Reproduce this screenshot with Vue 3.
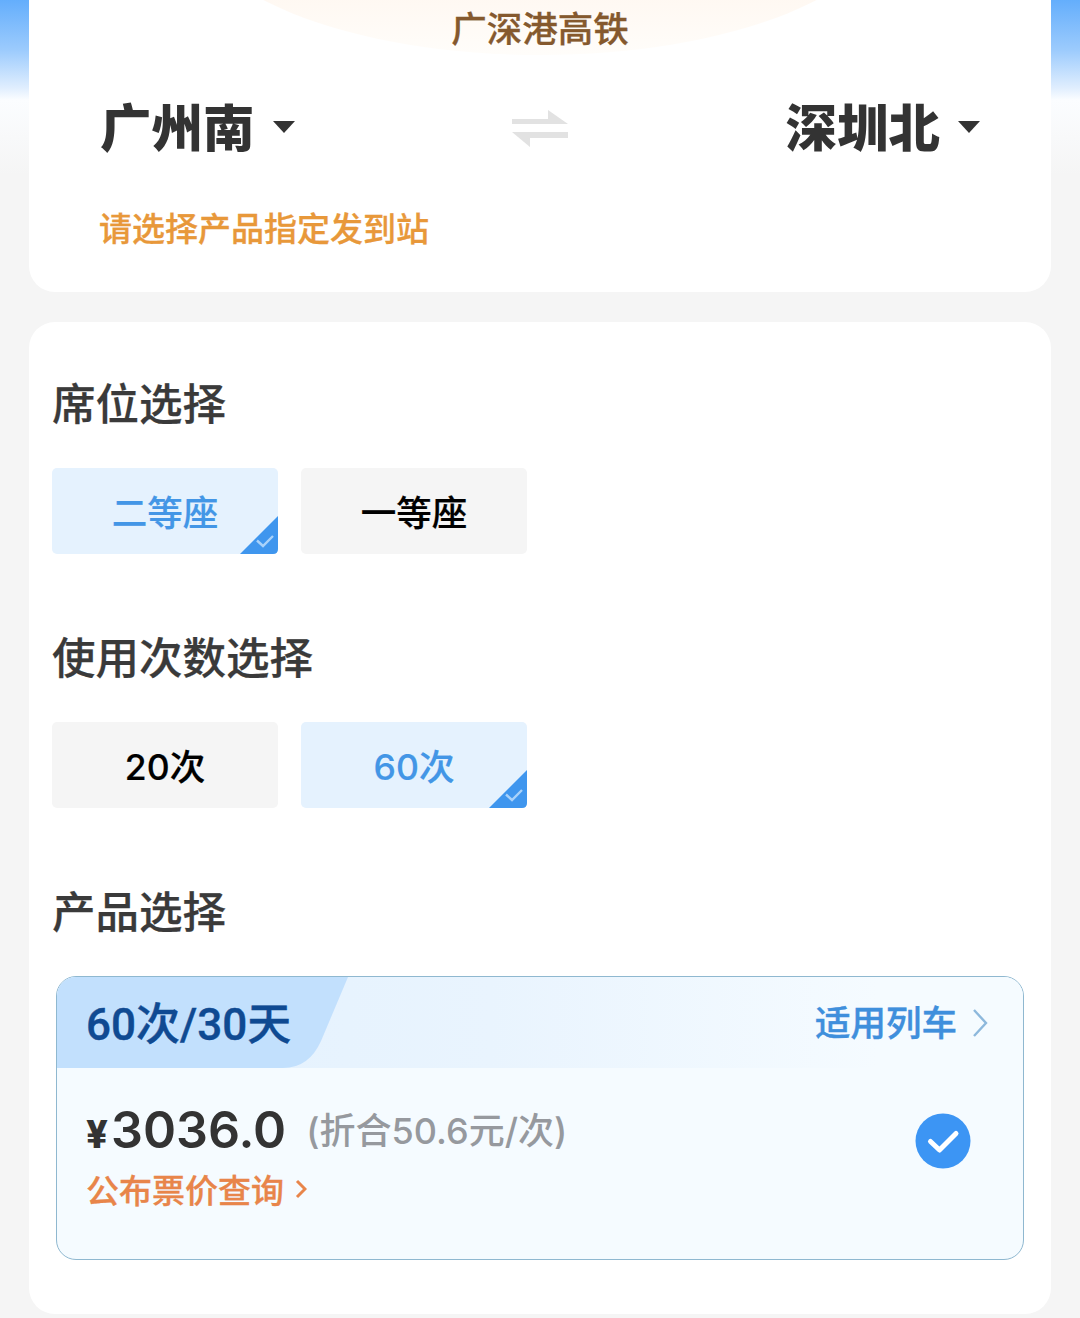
<script setup>
const seats = [
  { label: '二等座', active: true },
  { label: '一等座', active: false }
]
const counts = [
  { label: '20次', active: false },
  { label: '60次', active: true }
]
</script>

<template>
  <div class="page">
    <section class="card route">
      <div class="arc"></div>
      <div class="line-name">广深港高铁</div>
      <div class="stations">
        <div class="station">
          <span class="station-name">广州南</span>
          <span class="caret"></span>
        </div>
        <svg class="swap" width="60" height="40" viewBox="0 0 60 40">
          <path d="M2 16H58L38 2V11H2Z M2 24H58V30H20V39Z" fill="#e2e2e2" />
        </svg>
        <div class="station">
          <span class="station-name">深圳北</span>
          <span class="caret"></span>
        </div>
      </div>
      <div class="hint">请选择产品指定发到站</div>
    </section>

    <section class="card options">
      <h2 class="title">席位选择</h2>
      <div class="chips">
        <div v-for="s in seats" :key="s.label" class="chip" :class="{ active: s.active }">
          <span class="chip-text">{{ s.label }}</span>
          <svg v-if="s.active" class="corner" width="38" height="38" viewBox="0 0 38 38">
            <path d="M0 38L38 0V33Q38 38 33 38Z" fill="#3f96ee" />
            <path d="M17 24.5L23 30L33 20" fill="none" stroke="#a9d2fa" stroke-width="2.4" />
          </svg>
        </div>
      </div>

      <h2 class="title second">使用次数选择</h2>
      <div class="chips">
        <div v-for="c in counts" :key="c.label" class="chip" :class="{ active: c.active }">
          <span class="chip-text">{{ c.label }}</span>
          <svg v-if="c.active" class="corner" width="38" height="38" viewBox="0 0 38 38">
            <path d="M0 38L38 0V33Q38 38 33 38Z" fill="#3f96ee" />
            <path d="M17 24.5L23 30L33 20" fill="none" stroke="#a9d2fa" stroke-width="2.4" />
          </svg>
        </div>
      </div>

      <h2 class="title second">产品选择</h2>
      <div class="product">
        <div class="product-head">
          <svg class="tab" width="292" height="91" viewBox="0 0 292 91">
            <path d="M0 0H291L264 64Q252 91 226 91H0Z" fill="#c2e0fd" />
          </svg>
          <span class="plan">60次/30天</span>
          <span class="link">
            <span class="link-text">适用列车</span>
            <svg width="16" height="30" viewBox="0 0 16 30">
              <path d="M2 2L14 15L2 28" fill="none" stroke="#8db8dc" stroke-width="2.4" />
            </svg>
          </span>
        </div>
        <div class="product-body">
          <div class="info">
            <div class="price-row">
              <span class="yen">¥</span><span class="price">3036.0</span>
              <span class="per">(折合50.6元/次)</span>
            </div>
            <div class="query">
              <span class="query-text">公布票价查询</span>
              <svg width="12" height="22" viewBox="0 0 12 22">
                <path d="M2 3L10 11L2 19" fill="none" stroke="#e8854a" stroke-width="3" />
              </svg>
            </div>
          </div>
          <svg class="check" width="56" height="56" viewBox="0 0 56 56">
            <circle cx="28" cy="28" r="27.5" fill="#3c95f4" />
            <path d="M15.5 28.5L24.5 37L41 20.5" fill="none" stroke="#ffffff" stroke-width="5" stroke-linecap="round" stroke-linejoin="round" />
          </svg>
        </div>
      </div>
    </section>
  </div>
</template>

<style>
html, body {
  margin: 0;
  background: #f5f5f5;
}
</style>

<style scoped>
.page {
  box-sizing: border-box;
  height: 1318px;
  overflow: hidden;
  padding: 0 29px;
  display: flex;
  flex-direction: column;
  gap: 30px;
  background: linear-gradient(180deg, #64aefc 0, #9ccbfd 50px, #e0eefe 88px, #fbfdff 100px, #f5f5f5 175px);
  font-family: "Noto Sans CJK SC", "Liberation Sans", sans-serif;
}
.card {
  background: #fff;
  box-sizing: border-box;
  position: relative;
}
.route {
  height: 292px;
  flex: none;
  border-radius: 0 0 26px 26px;
  overflow: hidden;
}
.arc {
  position: absolute;
  left: 161px;
  top: -229px;
  width: 700px;
  height: 284px;
  border-radius: 50%;
  background: linear-gradient(180deg, #fff6ee 70%, #fffdfa 100%);
}
.line-name {
  position: relative;
  height: 54px;
  line-height: 54px;
  text-align: center;
  font-size: 35.5px;
  color: #85592e;
  font-weight: 500;
  -webkit-text-stroke: 0.3px #85592e;
}
.stations {
  position: relative;
  display: flex;
  align-items: center;
  justify-content: space-between;
  padding: 0 71px;
  height: 74px;
  margin-top: 35px;
}
.station {
  display: flex;
  align-items: center;
  gap: 18px;
}
.station-name {
  font-size: 51.5px;
  line-height: 74px;
  font-weight: 900;
  color: #333;
  position: relative;
  top: -1px;
}
.caret {
  width: 0;
  height: 0;
  border-left: 11px solid transparent;
  border-right: 11px solid transparent;
  border-top: 12px solid #333;
  margin-top: 2px;
}
.swap {
  margin-top: 4px;
}
.hint {
  position: relative;
  margin: 39px 0 0 70px;
  font-size: 33px;
  line-height: 50px;
  font-weight: 500;
  color: #e8983a;
  -webkit-text-stroke: 0.3px #e8983a;
}
.options {
  flex: none;
  height: 992px;
  border-radius: 26px;
  padding: 50px 23px 0;
}
.title {
  margin: 0;
  font-size: 43.5px;
  line-height: 60px;
  font-weight: 500;
  color: #3a3a3a;
  -webkit-text-stroke: 0.25px #3a3a3a;
}
.title.second {
  margin-top: 72px;
}
.chips {
  display: flex;
  gap: 23px;
  margin-top: 36px;
}
.chip {
  position: relative;
  width: 226px;
  height: 86px;
  border-radius: 5px;
  background: #f5f5f5;
  display: flex;
  align-items: center;
  justify-content: center;
  font-family: Inter, "Noto Sans CJK SC", sans-serif;
  font-size: 35.5px;
  font-weight: 500;
  color: #000;
}
.chip-text {
  position: relative;
  top: -1px;
  -webkit-text-stroke: 0.2px currentColor;
}
.chip.active {
  background: #e5f2fe;
  color: #4396e6;
}
.corner {
  position: absolute;
  right: 0;
  bottom: 0;
}
.product {
  box-sizing: border-box;
  width: 968px;
  height: 284px;
  margin: 36px 0 0 4px;
  border: 1.5px solid #8fb8d0;
  border-radius: 20px;
  overflow: hidden;
  background: #f5fbff;
}
.product-head {
  position: relative;
  height: 91px;
  display: flex;
  align-items: center;
  justify-content: space-between;
  padding: 0 35px 0 29px;
  background: linear-gradient(90deg, #e3f1fe 0, #e9f4fe 45%, #f5fbff 85%);
}
.tab {
  position: absolute;
  left: 0;
  top: 0;
}
.plan {
  position: relative;
  top: -2px;
  font-family: Roboto, "Noto Sans CJK SC", sans-serif;
  font-size: 44px;
  font-weight: 500;
  color: #0f4a92;
  -webkit-text-stroke: 0.4px #0f4a92;
}
.link {
  display: flex;
  align-items: center;
  gap: 15px;
  font-size: 35.5px;
  font-weight: 500;
  color: #3f8fdc;
}
.link-text {
  position: relative;
  top: -2px;
  -webkit-text-stroke: 0.4px #3f8fdc;
}
.product-body {
  display: flex;
  justify-content: space-between;
  padding: 26px 52px 0 29px;
}
.price-row {
  display: flex;
  align-items: baseline;
  height: 70px;
  position: relative;
  top: 5px;
  font-family: Inter, "Noto Sans CJK SC", sans-serif;
}
.yen {
  font-size: 38px;
  font-weight: 800;
  color: #333;
  margin-right: 3px;
}
.price {
  font-size: 50.2px;
  font-weight: 600;
  color: #333;
}
.per {
  position: relative;
  top: -4px;
  margin-left: 20px;
  font-size: 36px;
  font-weight: 500;
  color: #96999e;
}
.query {
  display: flex;
  align-items: center;
  gap: 11px;
  height: 46px;
  margin-top: 2px;
  font-size: 33px;
  font-weight: 500;
  color: #e8854a;
}
.query-text {
  -webkit-text-stroke: 0.3px #e8854a;
}
.check {
  margin-top: 19px;
}
</style>
